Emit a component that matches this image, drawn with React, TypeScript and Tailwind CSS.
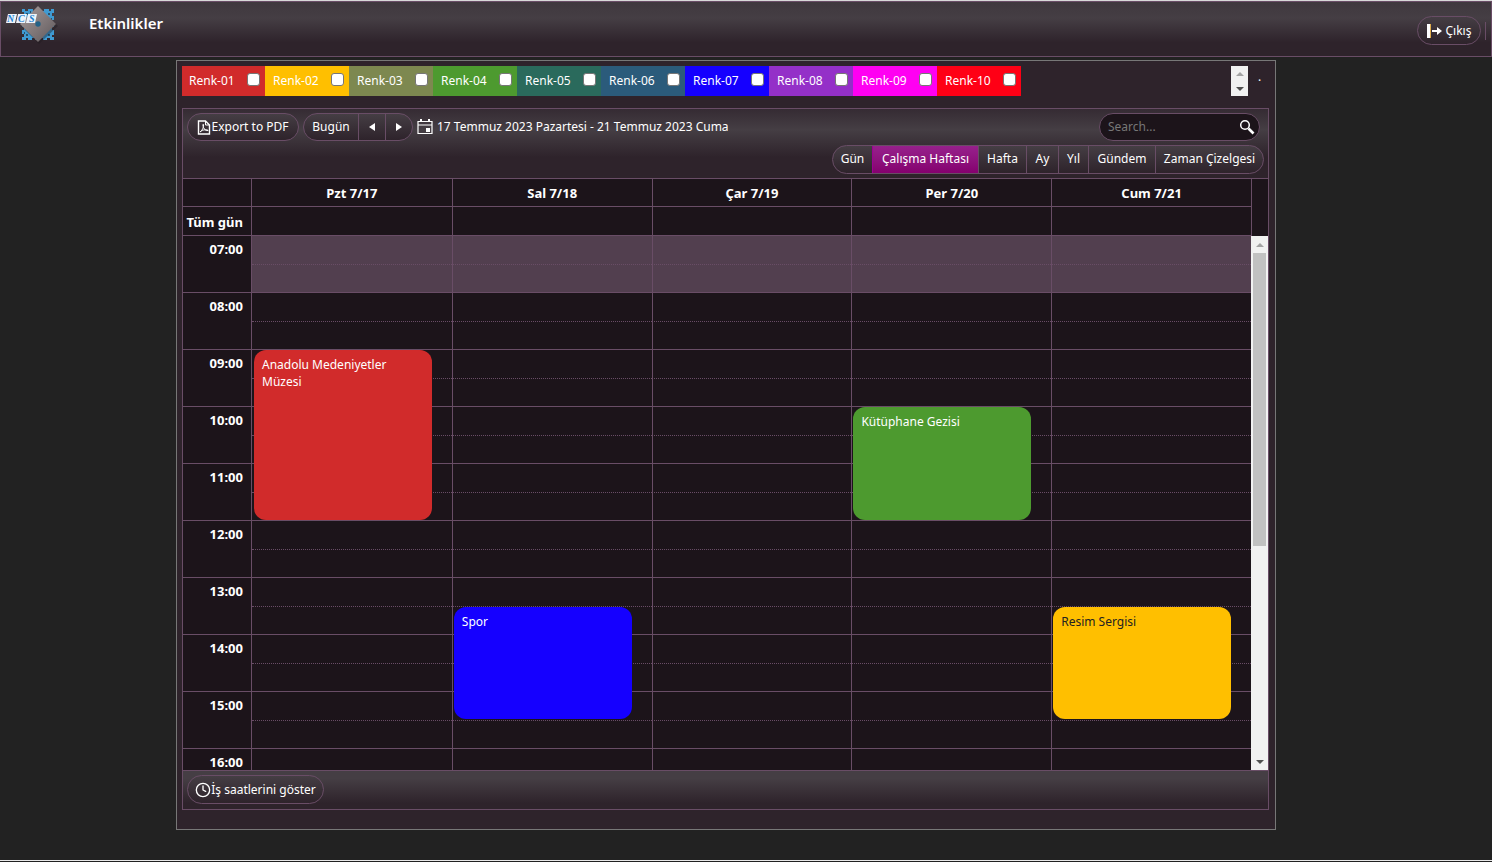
import { FiClock } from "react-icons/fi";

const colors = [
  { name: "Renk-01", bg: "bg-[#d12b2b]" },
  { name: "Renk-02", bg: "bg-[#ffbf00]" },
  { name: "Renk-03", bg: "bg-[#7d8850]" },
  { name: "Renk-04", bg: "bg-[#4d9a2f]" },
  { name: "Renk-05", bg: "bg-[#2a6a5c]" },
  { name: "Renk-06", bg: "bg-[#2b5b7b]" },
  { name: "Renk-07", bg: "bg-[#1500ff]" },
  { name: "Renk-08", bg: "bg-[#9430c8]" },
  { name: "Renk-09", bg: "bg-[#ff00f2]" },
  { name: "Renk-10", bg: "bg-[#ff0015]" },
];

const views = [
  { name: "Gün", width: "w-[39px]" },
  { name: "Çalışma Haftası", width: "w-[106px]" },
  { name: "Hafta", width: "w-12" },
  { name: "Ay", width: "w-8" },
  { name: "Yıl", width: "w-[30px]" },
  { name: "Gündem", width: "w-[67px]" },
  { name: "Zaman Çizelgesi", width: "w-[108px]" },
];
const activeView = "Çalışma Haftası";

const days = ["Pzt 7/17", "Sal 7/18", "Çar 7/19", "Per 7/20", "Cum 7/21"];

const FIRST_HOUR = 7;
const HOUR_HEIGHT = 57;
const hours = [7, 8, 9, 10, 11, 12, 13, 14, 15, 16];

const events = [
  { title: "Anadolu Medeniyetler Müzesi", day: 0, start: 9, end: 12, style: "bg-[#d12b2b] text-white" },
  { title: "Spor", day: 1, start: 13.5, end: 15.5, style: "bg-[#1500ff] text-white" },
  { title: "Kütüphane Gezisi", day: 3, start: 10, end: 12, style: "bg-[#4d9a2f] text-white" },
  { title: "Resim Sergisi", day: 4, start: 13.5, end: 15.5, style: "bg-[#ffbf00] text-[#222]" },
];

function Logo() {
  return (
    <svg width="56" height="40" viewBox="0 0 56 40" aria-label="NCS">
      <defs>
        <linearGradient id="chip" x1="0" y1="0" x2="1" y2="1">
          <stop offset="0" stopColor="#a89d9c" />
          <stop offset="1" stopColor="#5f585b" />
        </linearGradient>
      </defs>
      <rect x="20" y="5" width="26" height="26" fill="#3a8fc6" />
      <path
        d="M17 3h3v2h3V3h5v2h3V3h5v2h3V3h5v2h2V3h3v4h-2v3h2v4h-2v3h2v4h-2v3h2v5h-2v2h2v3h-4v-2h-3v2h-4v-2h-4v2h-4v-2h-3v2h-4v-2h-2v2h-4v-3h2v-3h-2v-4h2v-3h-2v-4h2v-3h-2V9h2V6h-2z"
        fill="#3f9ad2"
      />
      <path d="M21 7h2v2h-2zM43 7h2v2h-2zM21 28h2v2h-2zM43 28h2v2h-2zM25 5h1v2h-1zM46 12h1v2h-1zM19 26h1v2h-1z" fill="#26536f" />
      <path d="M34 2 53 20 34 38 16 20Z" fill="#1d1a1d" opacity=".4" />
      <path d="M33 0 51 18 33 36 15 18Z" fill="url(#chip)" />
      <circle cx="33" cy="18" r="2.700" fill="#236287" />
      <path d="M3 8h9l-2 9H1zM13 8h9l-2 9h-9zM23 8h9l-2 9h-9z" fill="#eef4fa" />
      <g fontFamily="Liberation Serif, serif" fontSize="10" fontWeight="bold" fontStyle="italic" fill="#1c7fd0">
        <text x="2" y="16">N</text>
        <text x="13" y="16">C</text>
        <text x="24" y="16">S</text>
      </g>
    </svg>
  );
}

function PdfIcon() {
  return (
    <svg width="14" height="15" viewBox="0 0 14 15" fill="none" stroke="currentColor">
      <path d="M1.500 1h7l4 4v9h-11z" strokeWidth="1.400" />
      <path d="M8.500 1v4h4" />
      <path d="M3 12c2-1 4-5 3.500-7.500C6 3.500 5.500 5 6.500 7.500 7.500 10 9.500 11 11 10.500 11.500 9.500 6 9 3 12Z" />
    </svg>
  );
}

function CalendarIcon() {
  return (
    <svg width="16" height="16" viewBox="0 0 16 16">
      <path d="M1 2.500h14v12H1zM1 6h14" fill="none" stroke="currentColor" strokeWidth="1.200" />
      <path d="M3 0h2v3H3zM11 0h2v3h-2zM9 9h4v4H9z" fill="currentColor" />
    </svg>
  );
}

function SearchIcon() {
  return (
    <svg width="16" height="16" viewBox="0 0 16 16" fill="none" stroke="currentColor">
      <circle cx="6" cy="6" r="4.300" strokeWidth="1.500" />
      <path d="M9.500 9.500 14.500 14.500" strokeWidth="2.600" />
    </svg>
  );
}

function Triangle({ direction }: { direction: "left" | "right" | "up" | "down" }) {
  const paths = {
    left: "M7 0v8L1 4z",
    right: "M1 0v8l6-4z",
    up: "M0 6h8L4 2z",
    down: "M0 2h8L4 6z",
  };
  return (
    <svg width="8" height="8" viewBox="0 0 8 8" fill="currentColor">
      <path d={paths[direction]} />
    </svg>
  );
}

function Header() {
  return (
    <header className="flex items-start justify-between h-14 border border-[#694d66] bg-linear-to-b from-[#3f383e] via-[#453e44] via-30% to-[#2e232b] to-75% pl-1">
      <div className="flex items-start">
        <div className="pt-1">
          <Logo />
        </div>
        <h1 className="pl-7 pt-[11px] text-[15px] leading-5 font-semibold">Etkinlikler</h1>
      </div>
      <div className="flex items-center pt-3.5 pr-[5px]">
        <button
          type="button"
          className="flex items-center justify-center gap-1 h-[29px] w-16 rounded-full border border-[#694d66] bg-linear-to-b from-[#453e44] to-[#2e232b]"
        >
          <svg width="15" height="14" viewBox="0 0 15 14" fill="currentColor">
            <path d="M0 0h3v14H0z" />
            <path d="M3 0h1v14H3z" fill="#e0ae4e" />
            <path d="M5 6h5V3l5 4-5 4V8H5z" />
          </svg>
          Çıkış
        </button>
        <span className="ml-1 h-[18px] w-px bg-[#694d66]" />
      </div>
    </header>
  );
}

function ColorFilter() {
  return (
    <div className="flex">
      {colors.map((color) => (
        <label
          key={color.name}
          className={`flex justify-between h-[30px] w-[84px] first:w-[83px] pl-2 first:pl-[7px] pr-[5px] leading-[30px] ${color.bg}`}
        >
          {color.name}
          <input
            type="checkbox"
            className="appearance-none mt-[7px] size-[13px] rounded-[3px] border border-[#767676] bg-white"
          />
        </label>
      ))}
      <div className="ml-auto mr-2.5 flex flex-col items-center justify-around h-[30px] w-[17px] bg-[#f1f1f1]">
        <span className="text-[#a3a3a3]">
          <Triangle direction="up" />
        </span>
        <span className="text-[#505050]">
          <Triangle direction="down" />
        </span>
      </div>
      <span className="w-[11px] leading-[22px]">.</span>
    </div>
  );
}

function Toolbar() {
  return (
    <div className="border-b border-[#694d66] bg-linear-to-b from-[#352b33] via-[#453e44] via-30% to-[#2e232b] to-70% pt-1 pb-1">
      <div className="flex items-center gap-1 pl-1 pr-2">
        <button
          type="button"
          className="flex items-center justify-center h-7 w-28 rounded-full border border-[#694d66] bg-linear-to-b from-[#453e44] to-[#2e232b]"
        >
          <PdfIcon />
          Export to PDF
        </button>
        <div className="flex h-7 rounded-full border border-[#694d66] bg-linear-to-b from-[#453e44] to-[#2e232b]">
          <button type="button" className="w-[54px]">
            Bugün
          </button>
          <button type="button" aria-label="Önceki" className="w-[27px] flex items-center justify-center border-l border-[#694d66]">
            <Triangle direction="left" />
          </button>
          <button type="button" aria-label="Sonraki" className="w-[27px] flex items-center justify-center border-l border-[#694d66]">
            <Triangle direction="right" />
          </button>
        </div>
        <button type="button" className="flex items-center gap-1">
          <CalendarIcon />
          17 Temmuz 2023 Pazartesi - 21 Temmuz 2023 Cuma
        </button>
        <div className="ml-auto flex items-center h-7 w-[161px] pl-2 pr-1 rounded-full border border-[#694d66] bg-[#1c141a]">
          <input
            type="text"
            aria-label="Search"
            placeholder="Search..."
            className="min-w-0 flex-1 bg-transparent outline-none placeholder:text-[#777]"
          />
          <SearchIcon />
        </div>
      </div>
      <div className="flex justify-end pt-1 pr-1">
        <div className="flex h-[29px] rounded-full border border-[#694d66] bg-linear-to-b from-[#453e44] to-[#2e232b] overflow-hidden">
          {views.map((view) => (
            <button
              type="button"
              key={view.name}
              className={`pb-0.5 border-l first:border-l-0 whitespace-nowrap ${view.width} ${
                view.name === activeView
                  ? "border-[#9c0092] bg-linear-to-b from-[#97208c] to-[#85006f]"
                  : "border-[#694d66]"
              }`}
            >
              {view.name}
            </button>
          ))}
        </div>
      </div>
    </div>
  );
}

function WeekHeader() {
  return (
    <table className="w-full table-fixed border-separate border-spacing-0 text-[13px] font-bold">
      <colgroup>
        <col className="w-[69px]" />
        {days.map((day) => (
          <col key={day} />
        ))}
        <col className="w-[17px]" />
      </colgroup>
      <thead>
        <tr>
          <td className="h-7 p-0 border-r border-b border-[#694d66]" />
          {days.map((day) => (
            <th key={day} className="h-7 p-0 border-b border-l nth-2:border-l-0 border-[#694d66]">
              {day}
            </th>
          ))}
          <td className="border-l border-[#694d66]" />
        </tr>
      </thead>
      <tbody>
        <tr>
          <th className="h-[29px] p-0 pt-0.5 pr-2 text-right whitespace-nowrap border-r border-b border-[#694d66]">
            Tüm gün
          </th>
          {days.map((day) => (
            <td key={day} className="border-b border-l nth-2:border-l-0 border-[#694d66]" />
          ))}
          <td className="border-l border-[#694d66]" />
        </tr>
      </tbody>
    </table>
  );
}

function WeekGrid() {
  return (
    <div className="flex h-[534px]">
      <div className="relative flex-1 overflow-hidden">
        <table className="w-full table-fixed border-separate border-spacing-0">
          <colgroup>
            <col className="w-[69px]" />
            {days.map((day) => (
              <col key={day} />
            ))}
          </colgroup>
          {hours.map((hour) => (
            <tbody key={hour} className={hour === FIRST_HOUR ? "group is-off" : "group"}>
              <tr>
                <th
                  rowSpan={2}
                  className="p-0 pt-1 pr-2 text-right align-top text-[13px] font-bold border-r border-b border-[#694d66]"
                >
                  {String(hour).padStart(2, "0")}:00
                </th>
                {days.map((day) => (
                  <td
                    key={day}
                    className="h-[29px] p-0 border-l nth-2:border-l-0 border-b border-[#694d66] [border-bottom-style:dotted] group-[.is-off]:bg-[#523f4f]"
                  />
                ))}
              </tr>
              <tr>
                {days.map((day) => (
                  <td
                    key={day}
                    className="h-7 p-0 border-l first:border-l-0 border-b border-[#694d66] group-[.is-off]:bg-[#523f4f]"
                  />
                ))}
              </tr>
            </tbody>
          ))}
        </table>
        <div className="absolute inset-y-0 right-0 left-[69px] grid grid-cols-5">
          {days.map((day, index) => (
            <div key={day} className="relative">
              {events
                .filter((event) => event.day === index)
                .map((event) => {
                  const top = Math.ceil((event.start - FIRST_HOUR) * HOUR_HEIGHT);
                  const bottom = Math.floor((event.end - FIRST_HOUR) * HOUR_HEIGHT) - 1;
                  return (
                    <div
                      key={event.title}
                      className={`absolute left-0.5 right-5 px-2 py-1.5 rounded-xl leading-[17px] ${event.style}`}
                      style={{ top, height: bottom - top }}
                    >
                      {event.title}
                    </div>
                  );
                })}
            </div>
          ))}
        </div>
      </div>
      <div className="flex flex-col items-center w-[17px] bg-[#f1f1f1]">
        <span className="flex items-center h-[17px] text-[#a3a3a3]">
          <Triangle direction="up" />
        </span>
        <span className="h-[293px] w-[13px] bg-[#c1c1c1]" />
        <span className="mt-auto flex items-center h-[17px] text-[#505050]">
          <Triangle direction="down" />
        </span>
      </div>
    </div>
  );
}

export default function App() {
  return (
    <div className="min-h-screen bg-[#222] text-white text-[12px] leading-[18px] font-['Noto_Sans','Open_Sans',sans-serif] border-t border-[#d8d8d8] flex flex-col">
      <Header />
      <main className="flex-1 pt-[3px] pr-10">
        <div className="max-w-[1100px] mx-auto border border-[#777] bg-[#2e232b] pt-[5px] pl-[5px] pr-1.5 pb-[19px]">
          <ColorFilter />
          <section className="mt-3 border border-[#694d66] bg-[#1c141a]">
            <Toolbar />
            <WeekHeader />
            <WeekGrid />
            <footer className="border-t border-[#694d66] bg-linear-to-b from-[#453e44] via-[#453e44] via-20% to-[#2e232b] to-85% p-1 pb-[5px]">
              <button
                type="button"
                className="flex items-center justify-center h-[29px] w-[137px] rounded-full border border-[#694d66] bg-linear-to-b from-[#453e44] to-[#2e232b]"
              >
                <FiClock size={16} />
                İş saatlerini göster
              </button>
            </footer>
          </section>
        </div>
      </main>
      <div className="h-0.5 border-t border-[#e8e8e8]" />
    </div>
  );
}
